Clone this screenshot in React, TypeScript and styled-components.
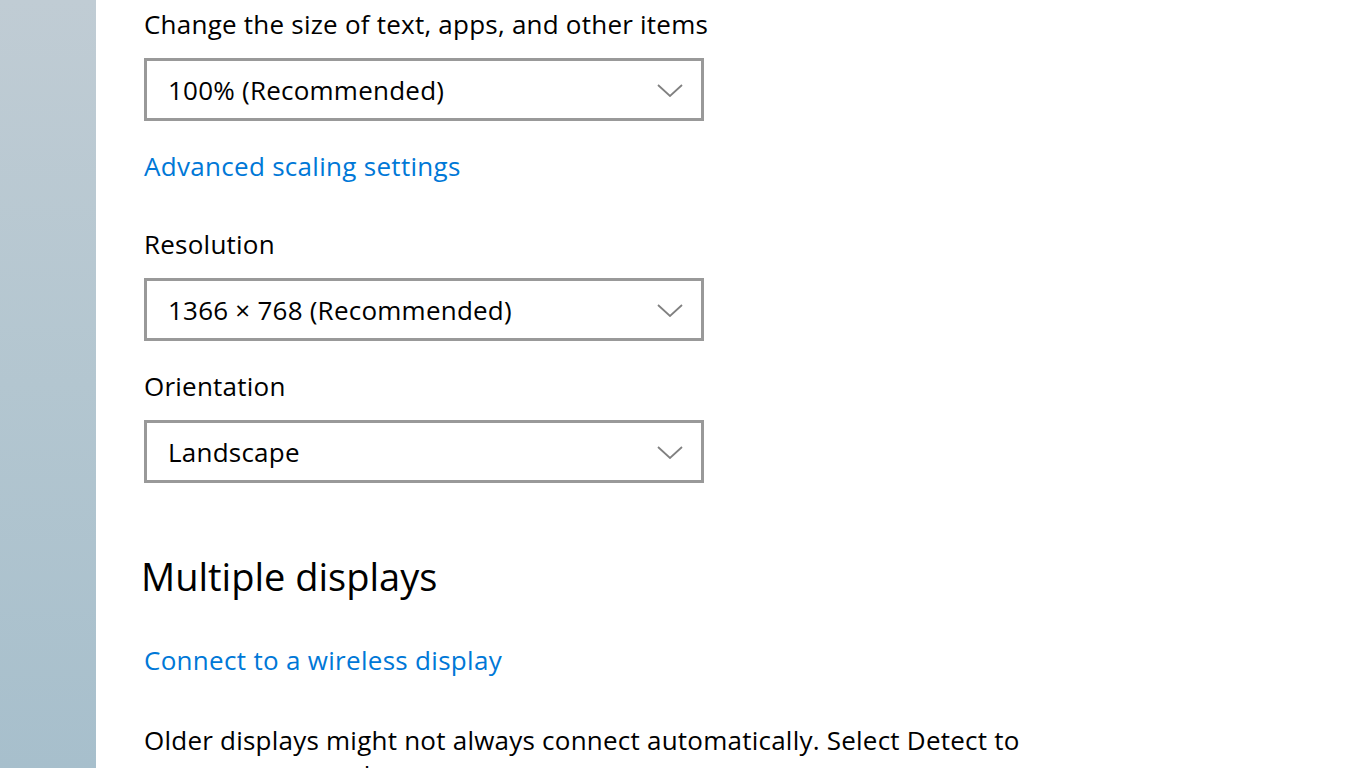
import React from "react";
import styled, { createGlobalStyle } from "styled-components";

const Global = createGlobalStyle`
  html, body { margin: 0; padding: 0; background: #ffffff; overflow: hidden; }
  body { font-family: "Open Sans", "Noto Sans", sans-serif; color: #000; }
`;

const Shell = styled.div`
  display: flex;
  width: 1366px;
  height: 768px;
  overflow: hidden;
`;

const SideStrip = styled.div`
  flex: 0 0 96px;
  height: 100%;
  background: linear-gradient(180deg, #c0ccd4 0%, #b3c6d0 50%, #a7bfcc 100%);
`;

const Content = styled.main`
  flex: 1;
  display: flex;
  flex-direction: column;
  align-items: flex-start;
  padding: 9px 0 0 48px;
  & > * { flex-shrink: 0; }
`;

const Label = styled.div<{ $gap?: number }>`
  font-size: 26px;
  line-height: 30px;
  letter-spacing: 0.23px;
  margin-top: ${(p) => p.$gap ?? 0}px;
  white-space: nowrap;
`;

const Link = styled.a<{ $gap?: number }>`
  font-size: 26px;
  line-height: 30px;
  letter-spacing: 0.3px;
  color: #0078d7;
  text-decoration: none;
  margin-top: ${(p) => p.$gap ?? 0}px;
  white-space: nowrap;
`;

const Select = styled.div<{ $gap?: number }>`
  box-sizing: border-box;
  width: 560px;
  height: 63px;
  margin-top: ${(p) => p.$gap ?? 0}px;
  border: 3px solid #999999;
  display: flex;
  align-items: center;
  justify-content: space-between;
  padding: 0 18px 0 21px;
  font-size: 26px;
  letter-spacing: 0.23px;
`;

const Chevron = styled.svg`
  width: 26px;
  height: 13px;
  flex: 0 0 auto;
  margin-top: 2px;
`;

const Heading = styled.h2<{ $gap?: number }>`
  margin: ${(p) => p.$gap ?? 0}px 0 0 -3px;
  font-weight: 400;
  font-size: 38px;
  line-height: 40px;
  letter-spacing: 0;
  white-space: nowrap;
`;

const Para = styled.p<{ $gap?: number }>`
  margin: ${(p) => p.$gap ?? 0}px 0 0;
  width: 900px;
  font-size: 26px;
  line-height: 35px;
  letter-spacing: 0.23px;
`;

const Dropdown = ({ value, gap }: { value: string; gap: number }) => (
  <Select $gap={gap}>
    <span>{value}</span>
    <Chevron viewBox="0 0 26 13">
      <polyline points="1,1 13,12 25,1" fill="none" stroke="#808080" strokeWidth="1.8" />
    </Chevron>
  </Select>
);

export default function App() {
  return (
    <>
      <Global />
      <Shell>
        <SideStrip />
        <Content>
          <Label>Change the size of text, apps, and other items</Label>
          <Dropdown value="100% (Recommended)" gap={19} />
          <Link href="#" $gap={30}>Advanced scaling settings</Link>
          <Label $gap={48}>Resolution</Label>
          <Dropdown value="1366 × 768 (Recommended)" gap={19} />
          <Label $gap={30}>Orientation</Label>
          <Dropdown value="Landscape" gap={19} />
          <Heading $gap={73}>Multiple displays</Heading>
          <Link href="#" $gap={49}>Connect to a wireless display</Link>
          <Para $gap={48}>
            Older displays might not always connect automatically. Select Detect to
            try to connect to them.
          </Para>
        </Content>
      </Shell>
    </>
  );
}
